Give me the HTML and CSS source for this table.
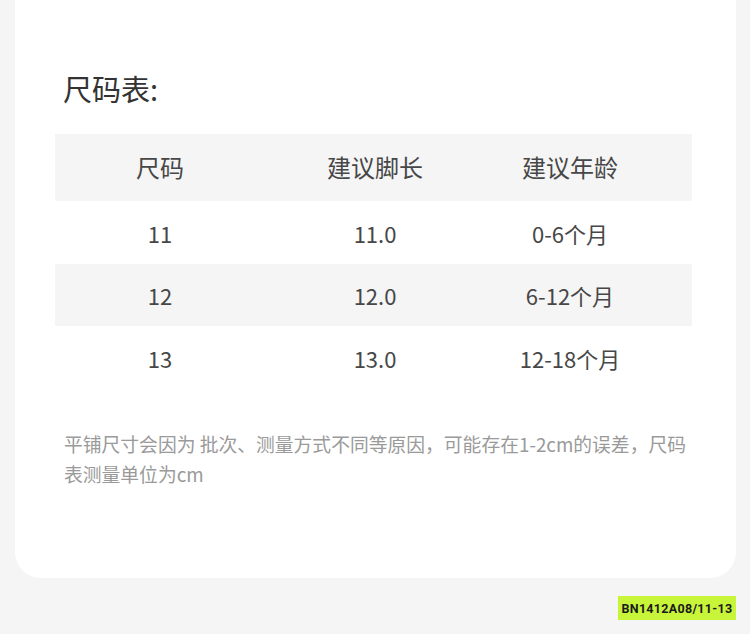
FILE: index.html
```html
<!DOCTYPE html>
<html lang="zh">
<head>
<meta charset="utf-8">
<link rel="stylesheet" href="styles.css">
</head>
<body>
<div class="card">
  <h1 class="title">尺码表:</h1>
  <div class="table">
    <div class="row head"><div>尺码</div><div>建议脚长</div><div>建议年龄</div></div>
    <div class="row r1"><div>11</div><div>11.0</div><div>0-6个月</div></div>
    <div class="row r2 alt"><div>12</div><div>12.0</div><div>6-12个月</div></div>
    <div class="row r3"><div>13</div><div>13.0</div><div>12-18个月</div></div>
  </div>
  <p class="note">平铺尺寸会因为 批次、测量方式不同等原因，可能存在1-2cm的误差，尺码表测量单位为cm</p>
</div>
<div class="badge-row"><span class="badge">BN1412A08/11-13</span></div>
</body>
</html>
```
FILE: styles.css
```css
html, body {
  margin: 0;
  padding: 0;
  background: #f5f5f5;
  font-family: "Noto Sans CJK SC", "Noto Sans", sans-serif;
}
body {
  width: 750px;
  height: 634px;
  overflow: hidden;
}
.card {
  margin: -20px 14px 0 15px;
  background: #ffffff;
  border-radius: 0 0 26px 26px;
  padding: 88px 44px 89px 40px;
  overflow: hidden;
}
.title {
  margin: 0 0 0 8px;
  font-size: 29px;
  line-height: 40px;
  font-weight: 400;
  color: #333333;
}
.table {
  margin-top: 26px;
}
.row {
  display: grid;
  grid-template-columns: 210px 220px 170px;
  align-items: center;
  color: #474747;
  font-size: 22px;
}
.row > div {
  text-align: center;
}
.head {
  height: 67px;
  background: #f5f5f5;
  font-size: 24px;
  padding-bottom: 3px;
  box-sizing: border-box;
}
.r1 { height: 63px; }
.r2 { height: 62px; }
.r3 { height: 63px; }
.alt { background: #f5f5f5; }
.note {
  margin: 40px 0 0 9px;
  width: 630px;
  font-size: 18.8px;
  line-height: 30px;
  color: #9a9a9a;
}
.badge-row {
  display: flex;
  justify-content: flex-end;
  margin: 18px 14px 0 0;
}
.badge {
  display: inline-flex;
  align-items: center;
  justify-content: center;
  width: 118px;
  height: 24px;
  background: #c8f53a;
  color: #1a1a1a;
  font-family: Roboto, "Liberation Sans", sans-serif;
  font-weight: 700;
  font-size: 12.5px;
  letter-spacing: 0.3px;
}
```
